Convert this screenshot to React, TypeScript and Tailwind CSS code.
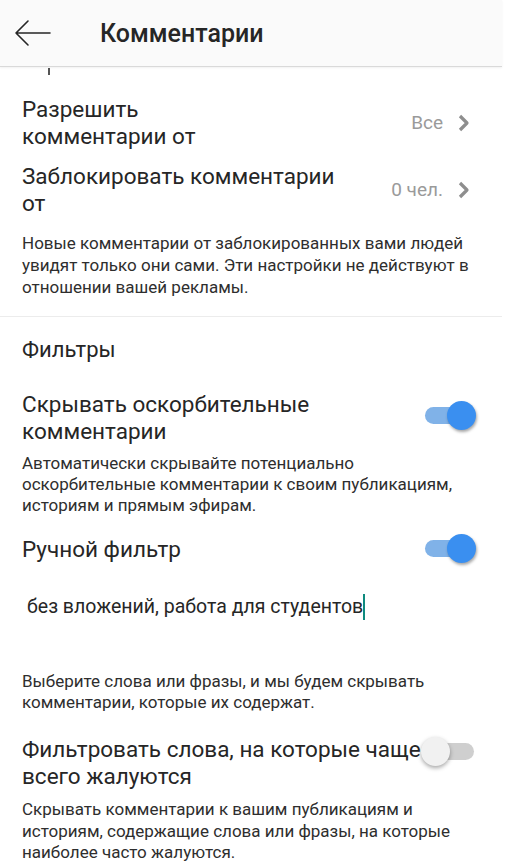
import React from "react";

function Toggle({ on }: { on: boolean }) {
  if (on) {
    return (
      <div className="relative w-[52px] h-[29px] shrink-0">
        <div className="absolute left-[1px] top-[6px] w-[38px] h-[17px] rounded-full bg-[#80b2e8]" />
        <div className="absolute right-0 top-0 w-[29px] h-[29px] rounded-full bg-[#3a8ff0] shadow-[1px_2px_3px_rgba(0,0,0,0.35)]" />
      </div>
    );
  }
  return (
    <div className="relative w-[53px] h-[29px] shrink-0">
      <div className="absolute right-0 top-[6px] w-[40px] h-[17px] rounded-full bg-[#cfcfcf]" />
      <div className="absolute left-0 top-0 w-[29px] h-[29px] rounded-full bg-[#f1f1f1] shadow-[0px_2px_4px_rgba(0,0,0,0.35)]" />
    </div>
  );
}

function Chevron() {
  return (
    <svg width="13" height="18" viewBox="0 0 13 18" className="ml-[14px]">
      <path d="M3 2 L10 9 L3 16" fill="none" stroke="#8e8e8e" strokeWidth="3.2" strokeLinejoin="round" />
    </svg>
  );
}

export default function App() {
  return (
    <div className="w-[511px] h-[863px] bg-white overflow-hidden text-[#262626]" style={{ fontFamily: "Roboto, 'Noto Sans', sans-serif" }}>
      <div className="relative z-10 w-[502px] h-[67px] bg-[#fafafa] border-b border-[#d9d9d9] shadow-[0_1px_2px_rgba(0,0,0,0.06)] flex items-center">
        <svg width="40" height="30" viewBox="0 0 40 30" className="ml-[13px]">
          <path d="M3 15 H37 M15 3 L3 15 L15 27" fill="none" stroke="#262626" strokeWidth="1.6" strokeLinecap="round" strokeLinejoin="round" />
        </svg>
        <div className="ml-[47px] text-[25px] font-medium text-[#262626] leading-none">Комментарии</div>
      </div>

      <div className="relative w-[502px] overflow-hidden">
        <div className="ml-[48px] mt-[1px] w-[2px] h-[7px] bg-[#555]" />

        <div className="px-[22px] pt-[21px]">
          <div className="flex items-center justify-between">
            <div className="text-[22.5px] leading-[27px] text-[#262626] whitespace-nowrap">
              Разрешить
              <br />
              комментарии от
            </div>
            <div className="flex items-center text-[19px] text-[#9a9a9a] mr-[10px]">
              Все
              <Chevron />
            </div>
          </div>
          <div className="flex items-center justify-between mt-[13px]">
            <div className="text-[22.5px] leading-[27px] text-[#262626] whitespace-nowrap">
              Заблокировать комментарии
              <br />
              от
            </div>
            <div className="flex items-center text-[19px] text-[#9a9a9a] mr-[10px]">
              0 чел.
              <Chevron />
            </div>
          </div>
          <p className="mt-[15px] text-[17px] leading-[22px] text-[#2e2e2e] whitespace-nowrap">
            Новые комментарии от заблокированных вами людей
            <br />
            увидят только они сами. Эти настройки не действуют в
            <br />
            отношении вашей рекламы.
          </p>
        </div>

        <div className="mt-[18px] h-[1px] bg-[#ececec]" />

        <div className="px-[22px]">
          <div className="mt-[20px] text-[22px] leading-[26px] text-[#262626]">Фильтры</div>

          <div className="flex items-center justify-between mt-[28px]">
            <div className="text-[22.5px] leading-[27px] whitespace-nowrap">
              Скрывать оскорбительные
              <br />
              комментарии
            </div>
            <div className="mr-[4px] -mt-[6px]">
              <Toggle on />
            </div>
          </div>
          <p className="mt-[8px] text-[17px] leading-[21px] text-[#2e2e2e] whitespace-nowrap">
            Автоматически скрывайте потенциально
            <br />
            оскорбительные комментарии к своим публикациям,
            <br />
            историям и прямым эфирам.
          </p>

          <div className="flex items-center justify-between mt-[18px]">
            <div className="text-[22.5px] leading-[28px]">Ручной фильтр</div>
            <div className="mr-[4px]">
              <Toggle on />
            </div>
          </div>

          <div className="mt-[31px] ml-[5px] flex items-center text-[19.5px] leading-[26px] text-[#262626]">
            <span className="whitespace-nowrap">без вложений, работа для студентов</span>
            <span className="inline-block w-[2px] h-[26px] bg-[#0e8a7e]" />
          </div>

          <p className="mt-[51px] text-[17px] leading-[20.5px] text-[#2e2e2e] whitespace-nowrap">
            Выберите слова или фразы, и мы будем скрывать
            <br />
            комментарии, которые их содержат.
          </p>

          <div className="flex items-center justify-between mt-[24px]">
            <div className="text-[22.5px] leading-[27px] whitespace-nowrap">
              Фильтровать слова, на которые чаще
              <br />
              всего жалуются
            </div>
            <div className="mr-[7px] -mt-[24px]">
              <Toggle on={false} />
            </div>
          </div>
          <p className="mt-[9px] text-[17px] leading-[21.5px] text-[#2e2e2e] whitespace-nowrap">
            Скрывать комментарии к вашим публикациям и
            <br />
            историям, содержащие слова или фразы, на которые
            <br />
            наиболее часто жалуются.
          </p>
        </div>
      </div>
    </div>
  );
}
